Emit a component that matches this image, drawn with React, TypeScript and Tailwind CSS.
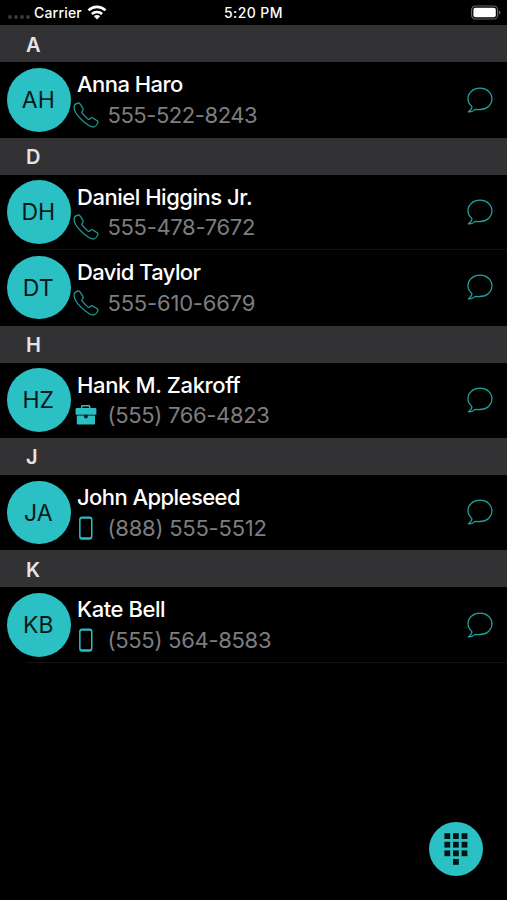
type Kind = 'phone' | 'work' | 'mobile'

interface Contact {
  initials: string
  name: string
  nameTracking: string
  number: string
  numberTracking: string
  kind: Kind
}

interface Section {
  letter: string
  contacts: Contact[]
}

const sections: Section[] = [
  {
    letter: 'A',
    contacts: [
      { initials: 'AH', name: 'Anna Haro', nameTracking: 'tracking-[-0.55px]', number: '555-522-8243', numberTracking: 'tracking-[-0.45px]', kind: 'phone' },
    ],
  },
  {
    letter: 'D',
    contacts: [
      { initials: 'DH', name: 'Daniel Higgins Jr.', nameTracking: 'tracking-[-0.47px]', number: '555-478-7672', numberTracking: 'tracking-[-0.33px]', kind: 'phone' },
      { initials: 'DT', name: 'David Taylor', nameTracking: 'tracking-[-0.6px]', number: '555-610-6679', numberTracking: 'tracking-[-0.2px]', kind: 'phone' },
    ],
  },
  {
    letter: 'H',
    contacts: [
      { initials: 'HZ', name: 'Hank M. Zakroff', nameTracking: 'tracking-[-0.36px]', number: '(555) 766-4823', numberTracking: 'tracking-[-0.33px]', kind: 'work' },
    ],
  },
  {
    letter: 'J',
    contacts: [
      { initials: 'JA', name: 'John Appleseed', nameTracking: 'tracking-[-0.56px]', number: '(888) 555-5512', numberTracking: 'tracking-[-0.23px]', kind: 'mobile' },
    ],
  },
  {
    letter: 'K',
    contacts: [
      { initials: 'KB', name: 'Kate Bell', nameTracking: 'tracking-[-0.45px]', number: '(555) 564-8583', numberTracking: 'tracking-[-0.3px]', kind: 'mobile' },
    ],
  },
]

const KindIcon = ({ kind }: { kind: Kind }) => {
  if (kind === 'phone') {
    return (
      <svg className="size-[26px]" viewBox="0 0 26 26" fill="none" stroke="#239e98" strokeWidth="1.2" strokeLinejoin="round">
        <path d="M4.6 1.1C2.6 1.8 1 3.3 1 5.2C1.2 8.2 2.8 11.3 5.2 14.2C8.6 18.4 12.5 21.8 16.6 24C18.2 24.9 20 25.2 21.4 24.7C23.2 23.9 24.6 22.3 25 20.4C25.1 19.7 24.8 19.2 24.2 18.8L19.8 15.9C19.1 15.4 18.3 15.4 17.7 16L16.6 17C16 17.5 15.3 17.4 14.7 16.9C12.5 15 10.6 12.9 9.1 10.9C8.7 10.3 8.8 9.7 9.3 9.2L10 8.2C10.4 7.6 10.3 7 10 6.3L7 1.9C6.4 1 5.6 .8 4.6 1.1Z" />
      </svg>
    )
  }
  if (kind === 'work') {
    return (
      <svg className="size-[26px]" viewBox="0 0 26 26" fill="#2bbfc1">
        <path fillRule="evenodd" d="M8 6V4.2Q8 3 9.2 3H16.2Q17.4 3 17.4 4.2V6H22.4Q23.4 6 23.4 7V12.8H2.6V7Q2.6 6 3.6 6ZM9.4 6H16V4.4H9.4Z" />
        <path d="M3.8 13.6H22V21.6Q22 22.6 21 22.6H4.8Q3.8 22.6 3.8 21.6Z" />
        <path d="M11 12.8H14.8V14.6Q14.8 16.6 12.9 16.6Q11 16.6 11 14.6Z" fill="#062223" />
      </svg>
    )
  }
  return (
    <svg className="size-[26px]" viewBox="0 0 26 26">
      <path
        fill="#2bbfc1"
        fillRule="evenodd"
        d="M9.3 1.4H16.3Q19.5 1.4 19.5 4.6V21.5Q19.5 24.7 16.3 24.7H9.3Q6.1 24.7 6.1 21.5V4.6Q6.1 1.4 9.3 1.4ZM7.6 5V21Q7.6 22.2 8.8 22.2H16.8Q18 22.2 18 21V5Q18 3.8 16.8 3.8H8.8Q7.6 3.8 7.6 5Z"
      />
    </svg>
  )
}

const BubbleIcon = () => (
  <svg className="size-[27px]" viewBox="0 0 27 27" fill="none" stroke="#239e98" strokeWidth="1.3" strokeLinejoin="round">
    <path d="M14 1.1C7.2 1.1 2 5.7 2 11.6C2 14.7 3.4 17.5 5.8 19.4C6.3 21.4 4.6 23.2 2.3 24.9C5 25.1 7.1 24.4 9.2 22.4C10.6 22.6 12.4 22.6 14 22.5C20.8 22.4 25.9 17.9 25.9 11.8C25.9 5.7 20.8 1.1 14 1.1Z" />
  </svg>
)

const StatusBar = () => (
  <header className="grid h-[25.4px] grid-cols-3 items-center text-[14px] font-medium text-white">
    <div className="flex items-center pl-2">
      <div className="flex w-[26px] gap-[2px] pt-[9px]">
        {[0, 1, 2, 3].map((i) => (
          <span key={i} className="size-[4px] rounded-full bg-[#3a3a3c]" />
        ))}
      </div>
      <span className="tracking-[0.2px]">Carrier</span>
      <svg className="ml-[5px] h-[15px] w-[20px]" viewBox="0 0 20 15" fill="none" stroke="white" strokeWidth="2.7">
        <path d="M1.5 5.4C6.3 .8 13.7 .8 18.5 5.4" />
        <path d="M4.9 9C7.7 6.3 12.3 6.3 15.1 9" />
        <path d="M10 14.4L6.8 11.2C8.6 9.5 11.4 9.5 13.2 11.2Z" fill="white" stroke="none" />
      </svg>
    </div>
    <span className="text-center tracking-[0.4px]">5:20 PM</span>
    <svg className="mr-[6px] h-[15px] w-[31px] justify-self-end" viewBox="0 0 31 15">
      <rect x="1.6" y="1" width="26" height="13" rx="3.8" fill="none" stroke="#68686a" strokeWidth="1.2" />
      <rect x="3.4" y="2.8" width="22.4" height="9.4" rx="2" fill="white" />
      <path d="M29 5.5Q30.6 6.2 30.6 7.5Q30.6 8.8 29 9.5Z" fill="#68686a" />
    </svg>
  </header>
)

const ContactRow = ({ contact, divider }: { contact: Contact; divider: boolean }) => (
  <li className="flex h-[75.5px] flex-col">
    <div className="flex grow pl-[7px]">
      <div className="mt-[5.8px] flex size-[63.5px] shrink-0 items-center justify-center rounded-full bg-[#2bc0c3] pt-px pr-px text-[23px] text-[#07191a]">
        {contact.initials}
      </div>
      <div className="flex grow flex-col pl-[2px]">
        <h3 className={`mt-[8px] pl-[4.5px] text-[22px] leading-[28px] font-medium whitespace-nowrap text-white ${contact.nameTracking}`}>
          {contact.name}
        </h3>
        <div className="mt-[2.6px] flex h-[28px] items-center">
          <KindIcon kind={contact.kind} />
          <span className={`ml-[9px] text-[22px] leading-[28px] whitespace-nowrap text-[#7d7d80] ${contact.numberTracking}`}>
            {contact.number}
          </span>
        </div>
      </div>
      <button className="mr-[14px] self-center" aria-label="Message">
        <BubbleIcon />
      </button>
    </div>
    {divider && <div className="-mt-px ml-[26px] h-px bg-[#111112]" />}
  </li>
)

const App = () => (
  <div className="relative h-[900px] w-[507px] overflow-hidden bg-black font-['Inter',sans-serif]">
    <StatusBar />
    <main>
      {sections.map((section, s) => (
        <section key={section.letter}>
          <h2 className="flex h-[36.9px] items-center bg-[#323234] pt-[1.4px] pl-[26px] text-[20px] font-semibold text-[#e4e4e6]">
            {section.letter}
          </h2>
          <ul>
            {section.contacts.map((contact, i) => (
              <ContactRow
                key={contact.name}
                contact={contact}
                divider={i < section.contacts.length - 1 || s === sections.length - 1}
              />
            ))}
          </ul>
        </section>
      ))}
    </main>
    <button
      aria-label="Keypad"
      className="absolute right-[24.5px] bottom-[24.5px] flex size-[54px] items-center justify-center rounded-full bg-[#2bc0c3]"
    >
      <svg className="h-[32px] w-[24px]" viewBox="0 0 24 32" fill="#061516">
        {[0, 1, 2].map((row) =>
          [0, 1, 2].map((col) => (
            <rect key={`${row}${col}`} x={0.4 + col * 8.6} y={0.2 + row * 8.6} width="5.8" height="5.8" />
          )),
        )}
        <rect x="9" y="26" width="5.8" height="5.8" />
      </svg>
    </button>
  </div>
)

export default App
